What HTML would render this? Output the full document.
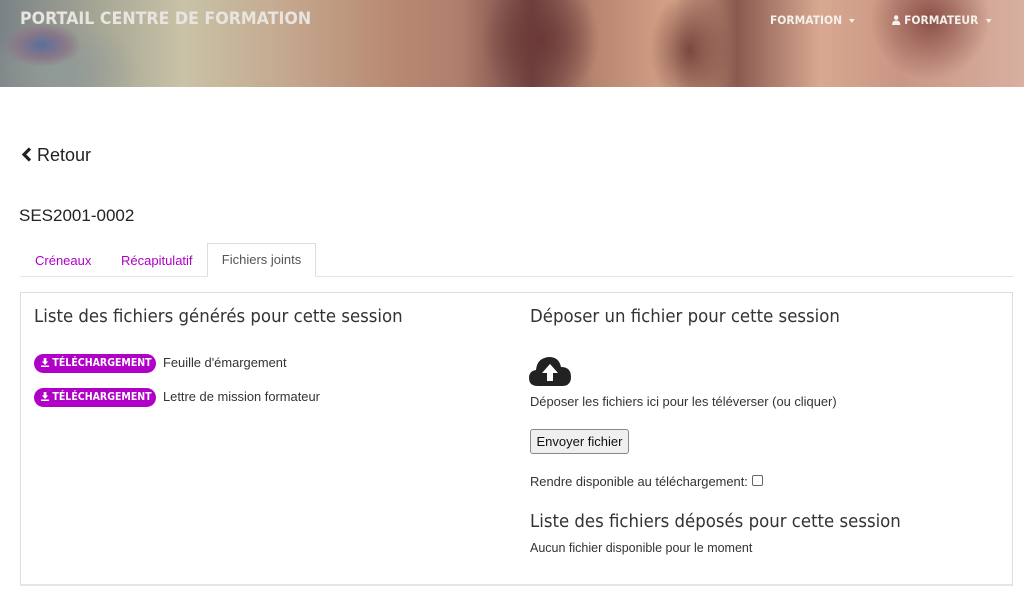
<!DOCTYPE html>
<html><head><meta charset="utf-8"><style>
*{margin:0;padding:0;box-sizing:border-box}
body{width:1024px;height:615px;background:#fff;font-family:"Liberation Sans",sans-serif;color:#333;position:relative;overflow:hidden}
.hdr{position:absolute;left:0;top:0;width:1024px;height:87px;
background:
radial-gradient(ellipse 40px 22px at 42px 45px,#5a6f9a 0%,#8a7888 60%,rgba(0,0,0,0) 100%),
radial-gradient(ellipse 80px 50px at 60px 70px,#909a98 0%,rgba(0,0,0,0) 100%),
radial-gradient(ellipse 60px 60px at 540px 40px,#6b3a38 0%,rgba(0,0,0,0) 100%),
radial-gradient(ellipse 40px 60px at 690px 50px,#7a4840 0%,rgba(0,0,0,0) 100%),
radial-gradient(ellipse 60px 60px at 930px 20px,#8a5048 0%,rgba(0,0,0,0) 100%),
linear-gradient(90deg,#7a8286 0%,#a8a896 10%,#c9c2a6 18%,#c4a88e 28%,#b98a74 38%,#b07e6c 45%,#6e4240 52%,#b78470 58%,#d6a488 66%,#8a5a50 72%,#d8a890 80%,#c99684 88%,#d8b0a0 100%);}
.hdr .t{position:absolute;left:20px;top:9px;font:bold 16.5px "DejaVu Sans",sans-serif;color:#e8e4e0;transform:scaleX(.96);transform-origin:left;white-space:nowrap}
.nav{position:absolute;top:13px;font:bold 11.5px "DejaVu Sans",sans-serif;color:#f4f0ec;transform:scaleX(.93);transform-origin:left;white-space:nowrap}
.car{display:inline-block;border-left:3.5px solid transparent;border-right:3.5px solid transparent;border-top:4px solid #f4f0ec;vertical-align:middle;margin-left:8px}
.a{position:absolute}
.tabline{position:absolute;left:20px;top:276px;width:993px;height:1px;background:#e4e4e4}
.tab{position:absolute;top:253px;font-size:13px;color:#b000c8}
.act{position:absolute;left:207px;top:243px;width:109px;height:34px;border:1px solid #ddd;border-bottom:1px solid #fff;background:#fff;font-size:13px;color:#555;text-align:center;line-height:32px}
.panel{position:absolute;left:20px;top:292px;width:993px;height:294px;border:1px solid #ddd;border-bottom:2px solid #e6e6e6}
.h{position:absolute;font:18px "DejaVu Sans",sans-serif;color:#333;transform:scaleX(.92);transform-origin:left;white-space:nowrap}
.badge{position:absolute;left:34px;width:122px;height:19px;border-radius:10px;background:#b000c8;color:#fff;font:bold 10.5px "DejaVu Sans",sans-serif;line-height:19px;padding-left:7px;white-space:nowrap}
.badge span{display:inline-block;transform:scaleX(.9);transform-origin:left}
.s{position:absolute;font-size:12.9px;color:#333;white-space:nowrap}
.btn{position:absolute;left:530px;top:429px;width:99px;height:25px;border:1px solid #888;border-radius:3px;background:#efefef;font-size:13px;line-height:23px;text-align:center;color:#111}
.cb{position:absolute;left:752px;top:475px;width:11px;height:11px;border:1px solid #666;border-radius:2px;background:#fff}
</style></head><body>
<div class="hdr">
<div class="t">PORTAIL CENTRE DE FORMATION</div>
<div class="nav" style="left:770px">FORMATION<span class="car"></span></div>
<div class="nav" style="left:892px"><svg width="9" height="10" viewBox="0 0 9 10" style="vertical-align:-1px"><circle cx="4.5" cy="2.6" r="2.4" fill="#f4f0ec"/><path d="M0 10 Q0 5.5 4.5 5.5 Q9 5.5 9 10Z" fill="#f4f0ec"/></svg> FORMATEUR<span class="car"></span></div>
</div>
<svg class="a" style="left:21px;top:147px" width="11" height="15" viewBox="0 0 11 15"><path d="M9 1.5 L3 7.5 L9 13.5" stroke="#222" stroke-width="3.2" fill="none"/></svg>
<div class="a" style="left:37px;top:145px;font-size:18px;color:#222">Retour</div>
<div class="a" style="left:19px;top:206px;font-size:17px;color:#222">SES2001-0002</div>
<div class="tabline"></div>
<div class="tab" style="left:35px">Créneaux</div>
<div class="tab" style="left:121px">Récapitulatif</div>
<div class="act">Fichiers joints</div>
<div class="panel"></div>
<div class="h" style="left:34px;top:306px">Liste des fichiers générés pour cette session</div>
<div class="badge" style="top:354px"><span><svg width="9" height="9" viewBox="0 0 9 9" style="vertical-align:-1px"><path d="M3 0h3v3.5h2L4.5 7 1 3.5h2z M0 7.5h9V9H0z" fill="#fff"/></svg> TÉLÉCHARGEMENT</span></div>
<div class="s" style="left:163px;top:355px">Feuille d'émargement</div>
<div class="badge" style="top:388px"><span><svg width="9" height="9" viewBox="0 0 9 9" style="vertical-align:-1px"><path d="M3 0h3v3.5h2L4.5 7 1 3.5h2z M0 7.5h9V9H0z" fill="#fff"/></svg> TÉLÉCHARGEMENT</span></div>
<div class="s" style="left:163px;top:389px">Lettre de mission formateur</div>
<div class="h" style="left:530px;top:306px">Déposer un fichier pour cette session</div>
<svg class="a" style="left:529px;top:355px" width="42" height="32" viewBox="0 0 42 32"><path d="M9 31 Q0 31 0 23 Q0 16 7 15 Q8 3 20 2 Q30 2 32 12 Q42 12 42 22 Q42 31 33 31Z" fill="#222"/><path d="M21 9 L13 18 H18 V26 H24 V18 H29Z" fill="#fff"/></svg>
<div class="s" style="left:530px;top:394px">Déposer les fichiers ici pour les téléverser (ou cliquer)</div>
<div class="btn">Envoyer fichier</div>
<div class="s" style="left:530px;top:474px">Rendre disponible au téléchargement:</div>
<div class="cb"></div>
<div class="h" style="left:530px;top:511px">Liste des fichiers déposés pour cette session</div>
<div class="s" style="left:530px;top:541px;font-size:12.5px">Aucun fichier disponible pour le moment</div>
</body></html>
